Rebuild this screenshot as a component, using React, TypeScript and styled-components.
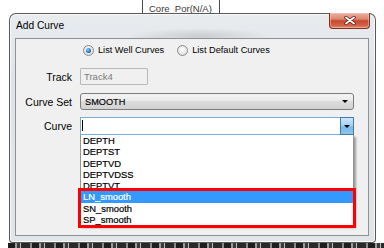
import React from "react";
import styled, { createGlobalStyle } from "styled-components";

const Global = createGlobalStyle`
  html, body { margin: 0; padding: 0; background: #fff; }
  body { width: 384px; height: 248px; overflow: hidden; font-family: "Liberation Sans", Arial, sans-serif; }
  #root { width: 384px; height: 248px; }
`;

const Desktop = styled.div`
  width: 384px;
  height: 248px;
  overflow: hidden;
  background: #fff;
  display: flex;
  flex-direction: column;
`;

const TopStrip = styled.div`
  height: 13px;
  overflow: hidden;
  display: flex;
  align-items: flex-start;
  padding-left: 142px;
  font-size: 9.5px;
  color: #3a3a3a;
`;

const Sep = styled.span`
  display: block;
  width: 1px;
  height: 13px;
  background: #4a4a4a;
`;

const BgText = styled.span`
  display: block;
  padding: 3px 7px 0 6px;
  line-height: 11px;
`;

const WindowRow = styled.div`
  display: flex;
  padding-left: 9px;
`;

const Win = styled.div`
  width: 367px;
  height: 230px;
  box-sizing: border-box;
  border: 1px solid rgba(40, 40, 40, 0.75);
  border-radius: 7px 7px 4px 4px;
  background:
    radial-gradient(ellipse 70px 8px at 190px 22px, rgba(120, 120, 120, 0.25), transparent),
    radial-gradient(ellipse 40px 6px at 140px 28px, rgba(120, 120, 120, 0.2), transparent),
    linear-gradient(#e9ecef, #dfe3e7 30%, #e2e5e8);
  box-shadow: inset 0 0 0 1px rgba(255, 255, 255, 0.75);
  display: flex;
  flex-direction: column;
`;

const TitleBar = styled.div`
  height: 24px;
  display: flex;
  justify-content: space-between;
  align-items: flex-start;
`;

const Title = styled.div`
  padding: 6px 0 0 6px;
  font-size: 10.2px;
  line-height: 12px;
  color: #000;
`;

const CloseBtn = styled.div`
  width: 41px;
  height: 16px;
  margin-right: 5px;
  margin-top: -1px;
  box-sizing: border-box;
  border: 1px solid #7a3225;
  border-top: none;
  border-radius: 0 0 4px 4px;
  background: linear-gradient(#eab0a0, #dd8871 40%, #c9472d 52%, #d2654a 85%, #e58e74);
  box-shadow: inset 0 0 0 1px rgba(255, 210, 200, 0.45);
  display: flex;
  align-items: center;
  justify-content: center;
`;

const ClientWrap = styled.div`
  flex: 1;
  display: flex;
  padding: 0 6px 6px 5px;
`;

const Client = styled.div`
  flex: 1;
  background: #f0f0f0;
  border: 1px solid #8d9299;
  padding: 6px 0 0 0;
  font-size: 9px;
  color: #000;
`;

const RadioRow = styled.div`
  display: flex;
  align-items: center;
  height: 11px;
  padding-left: 67px;
`;

const RadioItem = styled.label`
  display: flex;
  align-items: center;
  gap: 4px;
  margin-right: 13px;
  font-size: 9.2px;
  line-height: 11px;
`;

const RadioCircle = styled.span<{ $on?: boolean }>`
  width: 11px;
  height: 11px;
  box-sizing: border-box;
  border-radius: 50%;
  border: 1px solid #8a8a8a;
  background: radial-gradient(circle at 50% 40%, #ffffff, #e2e2e2 70%, #d0d0d0);
  display: flex;
  align-items: center;
  justify-content: center;
  &::after {
    content: "";
    display: ${(p) => (p.$on ? "block" : "none")};
    width: 5px;
    height: 5px;
    border-radius: 50%;
    background: radial-gradient(circle at 40% 35%, #8fd0ff, #1f6fc0 60%, #0c3f80);
  }
`;

const Form = styled.div`
  display: grid;
  grid-template-columns: 56px 274px;
  column-gap: 8px;
  margin-top: 12px;
  align-items: center;
`;

const Label = styled.div<{ $h: number; $gap?: number }>`
  height: ${(p) => p.$h}px;
  margin-bottom: ${(p) => p.$gap ?? 0}px;
  align-self: start;
  display: flex;
  align-items: center;
  justify-content: flex-end;
  font-size: 10.5px;
`;

const Cell = styled.div<{ $gap?: number }>`
  margin-bottom: ${(p) => p.$gap ?? 0}px;
  align-self: start;
  display: flex;
  flex-direction: column;
`;

const TextBox = styled.div`
  width: 68px;
  height: 17px;
  box-sizing: border-box;
  border: 1px solid #b5b9bd;
  border-radius: 1px;
  background: #f0f0f0;
  color: #7a7a7a;
  padding-left: 3px;
  display: flex;
  align-items: center;
  font-size: 9.5px;
`;

const ComboButton = styled.div`
  height: 17px;
  box-sizing: border-box;
  border: 1px solid #7c7c7c;
  border-radius: 3px;
  background: linear-gradient(#f4f4f4, #eaeaea 45%, #dcdcdc 50%, #d2d2d2);
  display: flex;
  align-items: center;
  justify-content: space-between;
  padding: 0 5px 0 4px;
  font-size: 9.2px;
  -webkit-text-stroke: 0.15px #000;
`;

const Arrow = styled.span`
  width: 0;
  height: 0;
  border-left: 3px solid transparent;
  border-right: 3px solid transparent;
  border-top: 3px solid #000;
`;

const ComboEdit = styled.div`
  height: 18px;
  box-sizing: border-box;
  border: 1px solid #79addf;
  background: #fff;
  display: flex;
  align-items: stretch;
  justify-content: space-between;
`;

const Caret = styled.span`
  width: 1px;
  height: 11px;
  background: #000;
  margin: 2px 0 0 1px;
`;

const DropBtn = styled.div`
  width: 14px;
  box-sizing: border-box;
  border: 1px solid #3d7bad;
  margin: -1px -1px -1px 0;
  background: linear-gradient(#cfe7fa, #9fcdf1 50%, #7db8e8 55%, #8fc4ec);
  display: flex;
  align-items: center;
  justify-content: center;
`;

const ListBox = styled.div`
  width: 274px;
  box-sizing: border-box;
  border: 1px solid #8f949a;
  border-top: none;
  background: #fff;
  box-shadow: 2px 2px 2px rgba(0, 0, 0, 0.35);
`;

const Item = styled.div<{ $sel?: boolean }>`
  height: 11.25px;
  line-height: 11.25px;
  padding-left: 2px;
  font-size: 9.4px;
  color: ${(p) => (p.$sel ? "#fff" : "#000")};
  -webkit-text-stroke: 0.2px ${(p) => (p.$sel ? "#fff" : "#000")};
  background: ${(p) => (p.$sel ? "#3399ff" : "transparent")};
  white-space: nowrap;
`;

const Highlight = styled.div`
  outline: 3px solid #ff0000;
`;

const BottomStrip = styled.div`
  height: 5px;
  margin-left: 8px;
  background: repeating-linear-gradient(90deg, #1e1e1e 0 7px, #9a9a9a 7px 9px, #3a3a3a 9px 12px, #bdbdbd 12px 13px, #2a2a2a 13px 22px, #8a8a8a 22px 24px);
  filter: blur(0.4px);
`;

const CloseIcon = () => (
  <svg width="12" height="9" viewBox="0 0 12 9">
    <path d="M2 1.5 L10 7.5 M10 1.5 L2 7.5" stroke="#5a1d12" strokeWidth="3.4" strokeLinecap="round" />
    <path d="M2 1.5 L10 7.5 M10 1.5 L2 7.5" stroke="#fff" strokeWidth="1.8" strokeLinecap="round" />
  </svg>
);

const items = ["DEPTH", "DEPTST", "DEPTVD", "DEPTVDSS", "DEPTVT"];
const smooth = ["LN_smooth", "SN_smooth", "SP_smooth"];

export default function App() {
  return (
    <Desktop>
      <Global />
      <TopStrip>
        <Sep />
        <BgText>Core_Por(N/A)</BgText>
        <Sep />
      </TopStrip>
      <WindowRow>
        <Win>
          <TitleBar>
            <Title>Add Curve</Title>
            <CloseBtn>
              <CloseIcon />
            </CloseBtn>
          </TitleBar>
          <ClientWrap>
            <Client>
              <RadioRow>
                <RadioItem>
                  <RadioCircle $on />
                  List Well Curves
                </RadioItem>
                <RadioItem>
                  <RadioCircle />
                  List Default Curves
                </RadioItem>
              </RadioRow>
              <Form>
                <Label $h={17} $gap={8}>Track</Label>
                <Cell $gap={8}>
                  <TextBox>Track4</TextBox>
                </Cell>
                <Label $h={17} $gap={7}>Curve Set</Label>
                <Cell $gap={7}>
                  <ComboButton>
                    SMOOTH
                    <Arrow />
                  </ComboButton>
                </Cell>
                <Label $h={18}>Curve</Label>
                <Cell>
                  <ComboEdit>
                    <Caret />
                    <DropBtn>
                      <Arrow />
                    </DropBtn>
                  </ComboEdit>
                  <ListBox>
                    {items.map((t) => (
                      <Item key={t}>{t}</Item>
                    ))}
                    <Highlight>
                      {smooth.map((t, i) => (
                        <Item key={t} $sel={i === 0}>
                          {t}
                        </Item>
                      ))}
                    </Highlight>
                  </ListBox>
                </Cell>
              </Form>
            </Client>
          </ClientWrap>
        </Win>
      </WindowRow>
      <BottomStrip />
    </Desktop>
  );
}
